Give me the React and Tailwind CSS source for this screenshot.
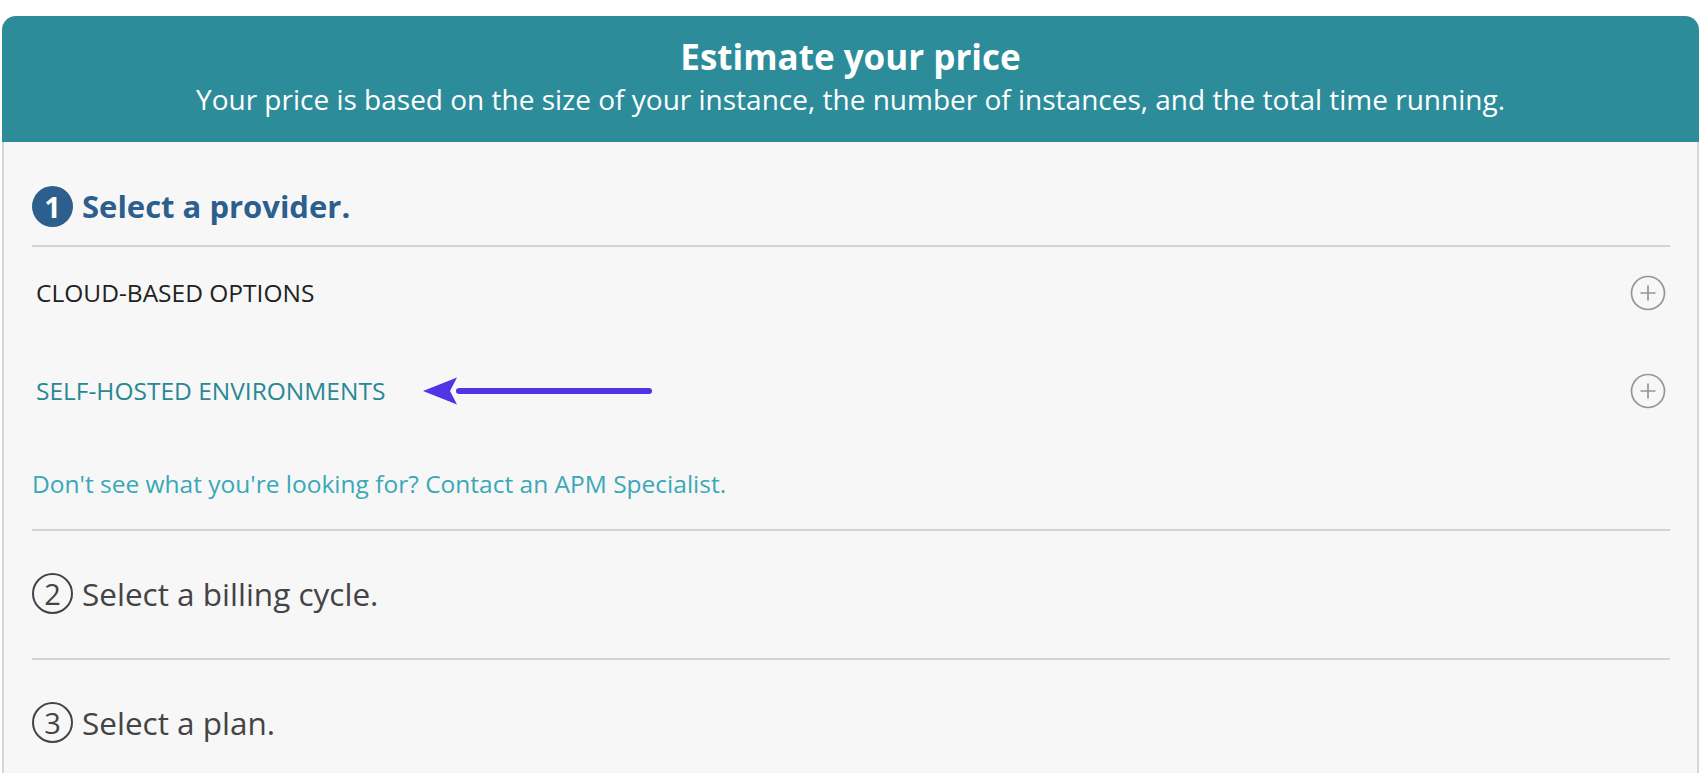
import React from "react";

function PlusCircle() {
  return (
    <svg width="36" height="36" viewBox="0 0 36 36" fill="none">
      <circle cx="18" cy="18" r="16.5" stroke="#969696" strokeWidth="1.7" />
      <path d="M10.5 18h15M18 10.5v15" stroke="#969696" strokeWidth="1.7" />
    </svg>
  );
}

function Arrow() {
  return (
    <svg width="240" height="32" viewBox="0 0 240 32" fill="none">
      <path d="M38 16H228" stroke="#5035e6" strokeWidth="6" strokeLinecap="round" />
      <path d="M2 16L36 2.5L29 16L36 29.5Z" fill="#5035e6" />
    </svg>
  );
}

export default function App() {
  const font = { fontFamily: '"Open Sans", "Noto Sans", sans-serif' };
  return (
    <div className="min-h-screen bg-white pt-[16px] px-[2px]" style={font}>
      <div className="w-[1697px] rounded-t-[14px] overflow-hidden">
        <div className="h-[126px] bg-[#2d8c99] flex flex-col items-center text-white">
          <div className="mt-[20px] text-[35px] leading-[42px] font-bold">Estimate your price</div>
          <div className="mt-[4px] text-[28px] leading-[34px]">
            Your price is based on the size of your instance, the number of instances, and the total time running.
          </div>
        </div>
        <div className="bg-[#f7f7f7] border-x-2 border-[#d6d6d6] pl-[28px] pr-[27px] pb-[40px]">
          <div className="pt-[43px] flex items-center">
            <div className="w-[41px] h-[41px] rounded-full bg-[#2c5e8e] text-white flex items-center justify-center text-[29px] font-bold leading-none">
              1
            </div>
            <div className="ml-[9px] text-[31px] font-bold text-[#2c5e8e] leading-[42px]">Select a provider.</div>
          </div>
          <div className="mt-[18px] h-[2px] bg-[#d4d4d4]" />
          <div className="mt-[26px] h-[40px] flex items-center justify-between">
            <div className="pl-[4px] text-[24.5px] text-[#222222]">CLOUD-BASED OPTIONS</div>
            <div className="mr-[4px]"><PlusCircle /></div>
          </div>
          <div className="mt-[58px] h-[40px] flex items-center justify-between">
            <div className="pl-[4px] flex items-center">
              <span className="text-[24.5px] text-[#2a8795]">SELF-HOSTED ENVIRONMENTS</span>
              <span className="ml-[36px]"><Arrow /></span>
            </div>
            <div className="mr-[4px]"><PlusCircle /></div>
          </div>
          <div className="mt-[53px] h-[40px] flex items-center text-[24.5px] text-[#3aa8b8]">
            Don't see what you're looking for? Contact an APM Specialist.
          </div>
          <div className="mt-[25px] h-[2px] bg-[#d4d4d4]" />
          <div className="mt-[42px] h-[41px] flex items-center">
            <div className="w-[41px] h-[41px] rounded-full border-2 border-[#444444] text-[#444444] flex items-center justify-center text-[29px] leading-none">
              2
            </div>
            <div className="ml-[9px] text-[31.5px] text-[#444444] leading-[42px]">Select a billing cycle.</div>
          </div>
          <div className="mt-[44px] h-[2px] bg-[#d4d4d4]" />
          <div className="mt-[42px] h-[41px] flex items-center">
            <div className="w-[41px] h-[41px] rounded-full border-2 border-[#444444] text-[#444444] flex items-center justify-center text-[29px] leading-none">
              3
            </div>
            <div className="ml-[9px] text-[31.5px] text-[#444444] leading-[42px]">Select a plan.</div>
          </div>
        </div>
      </div>
    </div>
  );
}
